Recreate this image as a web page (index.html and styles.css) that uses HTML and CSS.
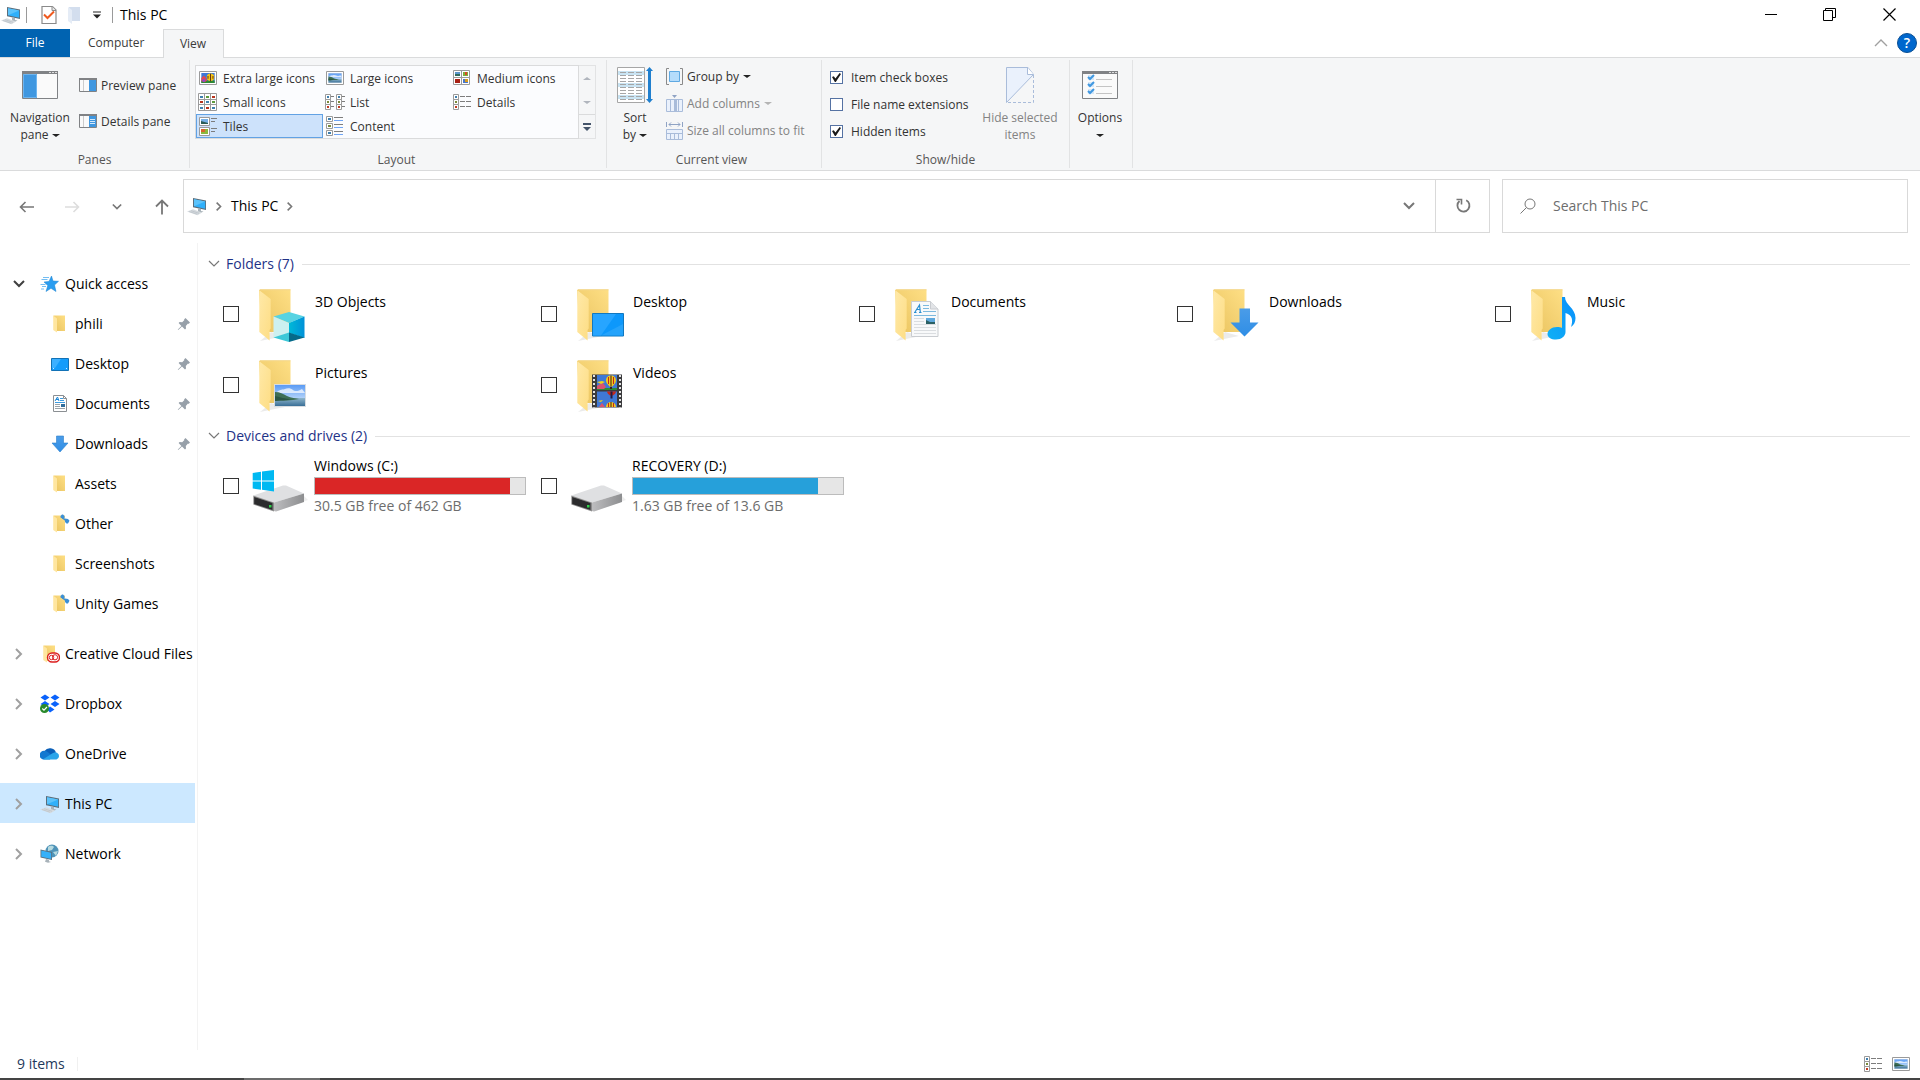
FILE: index.html
```html
<!DOCTYPE html>
<html lang="en">
<head>
  <meta charset="UTF-8">
  <meta name="viewport" content="width=device-width, initial-scale=1.0">
  <title>This PC</title>
  <link rel="stylesheet" href="styles.css">
</head>
<body>
  <!-- shared icons -->
  <svg class="sprite" width="0" height="0" aria-hidden="true">
    <defs>
      <linearGradient id="gFlap" x1="0" y1="0" x2="1" y2="1"><stop offset="0" stop-color="#ffe9a8"/><stop offset="1" stop-color="#fddd84"/></linearGradient>
      <linearGradient id="gBack" x1="1" y1="0" x2="0" y2="1"><stop offset="0" stop-color="#fedf85"/><stop offset="1" stop-color="#e9c35f"/></linearGradient>
      <linearGradient id="gBlue" x1="0" y1="0" x2="0" y2="1"><stop offset="0" stop-color="#4a9ce8"/><stop offset="1" stop-color="#2f8ee6"/></linearGradient>
      <linearGradient id="gSky" x1="0" y1="0" x2="0" y2="1"><stop offset="0" stop-color="#5a9bf5"/><stop offset="1" stop-color="#e6f2fb"/></linearGradient>
      <linearGradient id="gSea" x1="0" y1="0" x2="0" y2="1"><stop offset="0" stop-color="#8fb6cc"/><stop offset="1" stop-color="#3a6f97"/></linearGradient>
      <linearGradient id="gDrive" x1="0" y1="0" x2="1" y2="0"><stop offset="0" stop-color="#bdbdbf"/><stop offset="1" stop-color="#8d8e90"/></linearGradient>
      <linearGradient id="gCube" x1="0" y1="0" x2="1" y2="0"><stop offset="0" stop-color="#00b9d8"/><stop offset="1" stop-color="#0091d8"/></linearGradient>
      <linearGradient id="gNote" x1="0" y1="1" x2="1" y2="0"><stop offset="0" stop-color="#0fb0f5"/><stop offset="1" stop-color="#0a8ffb"/></linearGradient>
    </defs>
    <symbol id="pc" viewBox="0 0 20 20">
      <path d="M6 2 19 4.500v9.500L6 11.200z" fill="#5b6d7a"/><path d="M7 3.200 18.200 5.500v7.300L7 10.300z" fill="#2fb0fb"/><path d="M7 3.200 18.200 5.500 7 10.300z" fill="#5cc3fb"/>
      <path d="M11 12.300 14 13v2l2.500 .6-3 1.400-4-1.200 1.500-.8z" fill="#a9b3ba"/><path d="M0 15.500 6 13.300l9 3.200-4.500 2.700z" fill="#d5dade"/><path d="M2 15.500l8 2.700M4 14.700l8 2.600" stroke="#b4bcc2" stroke-width=".6"/>
    </symbol>
    <symbol id="folder" viewBox="0 0 56 56">
      <path d="M8 55l15-3 10-2-14-4z" fill="#000" opacity=".08"/>
      <path d="M7 4 8 3.500H38.500V46H17L8 20z" fill="url(#gBack)"/><path d="M8 3.800H38.500" stroke="#f3d68a"/>
      <path d="M7.300 4.300 18.700 13V42.500L17.600 44V54.500L7.300 46z" fill="url(#gFlap)"/>
    </symbol>
    <symbol id="mini-folder" viewBox="0 0 20 20">
      <path d="M3.500 1.500H15V17H6z" fill="url(#gBack)"/><path d="M3.200 1.500 7 4.500V18.500L3.200 16z" fill="#ffe6a0"/>
    </symbol>
    <symbol id="mini-drop" viewBox="0 0 20 20">
      <use href="#mini-folder"/><path d="M10.500 2l1.500-1.500h1L14.500 2v2.500L13 5l-2.500-1.500zM15 4.500l3 .5 1.500 1.800-1.500 2.700h-1.500L15 8z" fill="#3b8fd6"/><path d="M12.500 4l4 3" stroke="#3b8fd6" stroke-width="1.500"/>
    </symbol>
    <symbol id="arrow-down" viewBox="0 0 20 20">
      <path d="M6.500 2h7v7H18l-8 9-8-9h4.500z" fill="url(#gBlue)" stroke="#2c7fcb" stroke-width=".6"/>
    </symbol>
    <symbol id="photo" viewBox="0 0 32 23">
      <path d="M0 0h32v23H0z" fill="#d9dde1"/><path d="M1 1h30v21H1z" fill="url(#gSky)"/>
      <path d="M3 8c3-3 6-2 8-3s6-1 8 1 6 1 9-1l3 4H2z" fill="#fff" opacity=".7"/>
      <path d="M1 14h30v8H1z" fill="url(#gSea)"/><path d="M1 8c5 0 8 2 12 4s9 2 12 3c-8 2-16 1-24 2z" fill="#3e6f55"/>
      <path d="M1 12c6 1 9 3 17 3-6 2-11 1-17 2z" fill="#2b5544"/>
    </symbol>
    <symbol id="balloon" viewBox="0 0 16 12">
      <path d="M0 0h16v12H0z" fill="#3c78d8"/><path d="M0 9h16v3H0z" fill="#2d8a34"/><path d="M0 6l3-3 2 2 2 4-3 2-4-1z" fill="#e04a52"/><path d="M1 8l3-1 1 3-3 1z" fill="#8a4bd0"/>
      <circle cx="11" cy="5" r="4.500" fill="#f5c518"/><path d="M10.500 1h1v9h-1z" fill="#4a1b14"/><path d="M7.500 3.500h1v3.500h-1zM13.500 3.500h1v3.500h-1z" fill="#4a1b14"/>
    </symbol>
    <symbol id="pin" viewBox="0 0 14 14">
      <path d="M8.500 1 13 5.500 11.500 7 11 6.600 8.800 9l.2 2.500L8 12.500 5 9.500 1.500 12.800.8 13l.3-.8L4.400 9 1.600 6l1-1L5.200 5.200 7.400 3 7 2.500z" fill="#97a0a9"/>
    </symbol>
    <symbol id="chev-right" viewBox="0 0 10 14"><path d="M2 2l5 5-5 5" fill="none" stroke="currentColor" stroke-width="2"/></symbol>
    <symbol id="chev-down" viewBox="0 0 12 12"><path d="M1 3l5 5 5-5" fill="none" stroke="currentColor" stroke-width="2"/></symbol>
    <symbol id="chev-thin" viewBox="0 0 12 12"><path d="M1 3l5 5 5-5" fill="none" stroke="currentColor" stroke-width="1.200"/></symbol>
    <symbol id="drive" viewBox="0 0 56 56">
      <path d="M22 54 56 42l-4-4z" fill="#000" opacity=".07"/>
      <path d="M1.300 37.500 31 27.500h3L52 35.500 22 44.500z" fill="#dfe0e2"/><path d="M22 44.500 52 35.500v8.500L24 53.500l-2-.5z" fill="url(#gDrive)"/>
      <path d="M1.300 37.500 22 44.500V53.500L1.300 46.500z" fill="#8d8d8d"/><path d="M2.200 39 20.500 45v7L2.200 46z" fill="#2b2b2d"/><path d="M17 47h2.500v2.500H17z" fill="#2fd04a"/>
    </symbol>
    <symbol id="thumb-list" viewBox="0 0 18 18">
      <g fill="#fff" stroke="#9a9a9a"><path d="M.5 1.500h5v5h-5zM.5 6.500h5v5h-5zM.5 11.500h5v5h-5z"/></g>
      <path d="M2 3h2v2H2z" fill="#3f7fae"/><path d="M2 8h2v2H2z" fill="#7a8a3a"/><path d="M2 13h2v2H2z" fill="#c33a22"/>
      <path d="M7 3.500h5M13 3.500h5M7 8.500h5M13 8.500h5M7 13.500h5M13 13.500h5" stroke="#7d7d7d"/>
    </symbol>
  </svg>

  <header class="titlebar">
    <svg class="ico20"><use href="#pc"/></svg>
    <span class="divider"></span>
    <button class="quick" aria-label="Properties">
      <svg width="16" height="20" viewBox="0 0 16 20"><path d="M1 1.500h10.500L15 5v13.500H1z" fill="#fff" stroke="#8a8a8a" stroke-width="1.200"/><path d="M11 1.500V5.500h4" fill="#e6e6e6" stroke="#8a8a8a"/><path d="M3 9.500l3.500 3.500L13 6.500" fill="none" stroke="#ef5a1f" stroke-width="2"/></svg>
    </button>
    <button class="quick" aria-label="New folder">
      <svg width="14" height="20" viewBox="0 0 14 20"><path d="M1 2h11v14H3z" fill="#d3deee"/><path d="M0 2l4 3v14l-4-3z" fill="#e5ecf6"/></svg>
    </button>
    <button class="quick small" aria-label="Customize Quick Access Toolbar">
      <svg width="8" height="8" viewBox="0 0 8 8"><path d="M0 1h8" stroke="#222" stroke-width="1"/><path d="M0 3.500h8L4 7.500z" fill="#222"/></svg>
    </button>
    <span class="divider"></span>
    <h1>This PC</h1>
    <div class="window-buttons">
      <button aria-label="Minimize"><svg width="13" height="13"><path d="M0 6.500h12" stroke="#000"/></svg></button>
      <button aria-label="Restore"><svg width="13" height="13"><path d="M.5 2.500h9v10h-9zM2.500 2.500v-2h10v9h-3" fill="none" stroke="#000"/></svg></button>
      <button aria-label="Close"><svg width="13" height="13"><path d="M.5.5l12 12M12.500.5l-12 12" stroke="#000" stroke-width="1.200"/></svg></button>
    </div>
  </header>

  <div class="tabs">
    <button class="tab file">File</button>
    <button class="tab">Computer</button>
    <button class="tab active">View</button>
    <div class="tabs-right">
      <button aria-label="Minimize the Ribbon"><svg width="14" height="8"><path d="M1 7l6-6 6 6" fill="none" stroke="#a0a0a0" stroke-width="1.400"/></svg></button>
      <button class="help" aria-label="Help">?</button>
    </div>
  </div>

  <section class="ribbon" aria-label="View ribbon">
    <div class="group panes">
      <div class="tools">
        <button class="big">
          <svg width="36" height="36" viewBox="0 0 36 36"><path d="M.5 4.500h35v27H.5z" fill="#fafafa" stroke="#808285"/><path d="M0 4h36v3H0z" fill="#808285"/><path d="M27 5h2v1h-2zM30 5h2v1h-2zM33 5h2v1h-2z" fill="#ddd"/><path d="M1 7h14v24H1z" fill="#3f97e0"/><path d="M1.500 7.500h13v23h-13z" fill="none" stroke="#6db4ee"/></svg>
          Navigation<br>pane <i class="caret"></i>
        </button>
        <div class="pair">
          <button class="line"><svg width="18" height="14"><path d="M.5.5h17v13H.5z" fill="#fafafa" stroke="#808285"/><path d="M0 0h18v2H0z" fill="#808285"/><path d="M4.500 2v11" stroke="#ccc"/><path d="M10 2h7v11h-7z" fill="#3f97e0"/></svg>Preview pane</button>
          <button class="line"><svg width="18" height="14"><path d="M.5.5h17v13H.5z" fill="#fafafa" stroke="#808285"/><path d="M0 0h18v2H0z" fill="#808285"/><path d="M4.500 2v11" stroke="#ccc"/><path d="M10 2h7v11h-7z" fill="#3f97e0"/><path d="M11 5.500h5M11 7.500h5M11 9.500h5" stroke="#d4e9fb"/></svg>Details pane</button>
        </div>
      </div>
      <div class="caption">Panes</div>
    </div>

    <div class="group layout">
      <div class="tools">
        <div class="gallery">
          <button><svg width="20" height="20"><path d="M1.500 3.500h17v13h-17z" fill="#fff" stroke="#9a9a9a"/><use href="#balloon" x="3" y="5" width="14" height="10"/></svg>Extra large icons</button>
          <button><svg width="20" height="20"><path d="M1.500 3.500h17v13h-17z" fill="#fff" stroke="#9a9a9a"/><use href="#photo" x="2" y="5" width="16" height="10"/></svg>Large icons</button>
          <button><svg width="20" height="20"><path d="M1.500 2.500h16v14h-16zM9.500 2.500v14M1.500 9.500h16" fill="#fff" stroke="#9a9a9a"/><path d="M3 4h5v4H3z" fill="#5b96cc"/><path d="M3 6h5v2H3z" fill="#2f6a5c"/><path d="M11 4h5v4h-5z" fill="#7cae3c"/><path d="M13 4h2v3h-2z" fill="#d84a25"/><path d="M3 11h5v4H3z" fill="#a82014"/><path d="M11 11h5v4h-5z" fill="#4a77c8"/><path d="M13 11h3v3h-3z" fill="#d99c1c"/></svg>Medium icons</button>
          <button><svg width="20" height="20"><path d="M.5 1.500h18v17H.5zM6.500 1.500v17M12.500 1.500v17M.5 7.500h18M.5 12.500h18" fill="#fff" stroke="#9a9a9a"/><path d="M2 4h3v2H2zM8 9h3v2H8zM14 15h3v2h-3zM2 15h3v2H2z" fill="#3f7fae"/><path d="M8 4h3v2H8zM14 9h3v2h-3z" fill="#5d9a3c"/><path d="M14 4h3v2h-3zM2 9h3v2H2zM8 15h3v2H8z" fill="#b8321c"/></svg>Small icons</button>
          <button><svg width="20" height="20"><path d="M.5 2.500h5v5h-5zM.5 7.500h5v5h-5zM.5 12.500h5v5h-5zM11.500 2.500h5v5h-5zM11.500 7.500h5v5h-5zM11.500 12.500h5v5h-5z" fill="#fff" stroke="#9a9a9a"/><path d="M2 4h2v2H2zM13 4h2v2h-2z" fill="#3f7fae"/><path d="M2 9h2v2H2zM13 9h2v2h-2z" fill="#7a8a3a"/><path d="M2 14h2v2H2zM13 14h2v2h-2z" fill="#c33a22"/><path d="M6 4.500h3M6 9.500h3M6 14.500h3M17 4.500h3M17 9.500h3M17 14.500h3" stroke="#7d7d7d"/></svg>List</button>
          <button><svg width="20" height="20"><use href="#thumb-list" x="1" y="1" width="18" height="18"/></svg>Details</button>
          <button class="selected"><svg width="20" height="20"><path d="M1.500 1.500h10v8h-10zM1.500 11.500h10v8h-10z" fill="#fff" stroke="#9a9a9a"/><path d="M3 3h7v5H3z" fill="#77b0e6"/><path d="M3 5l7 2v1H3z" fill="#2c5c54"/><path d="M3 13h7v5H3z" fill="#8bb83e"/><path d="M3 13h4v3H3z" fill="#d8662c"/><path d="M13 2.500h6M13 5.500h4M13 12.500h6M13 15.500h4" stroke="#7d7d7d"/></svg>Tiles</button>
          <button><svg width="20" height="20"><path d="M1.500.5h6v5h-6zM1.500 7.500h6v5h-6zM1.500 14.500h6v5h-6z" fill="#fff" stroke="#9a9a9a"/><path d="M3 2h3v2H3zM3 16h3v2H3z" fill="#3f7fae"/><path d="M3 9h3v2H3z" fill="#7a8a3a"/><path d="M9 1.500h9M9 8.500h9M9 15.500h9" stroke="#7d7d7d"/><path d="M9 4.500h9M9 11.500h9M9 18.500h9" stroke="#6fa5f5"/></svg>Content</button>
        </div>
        <div class="gallery-scroll">
          <button aria-label="Row up"><i class="caret up dim"></i></button>
          <button aria-label="Row down"><i class="caret dim"></i></button>
          <button class="more" aria-label="More"><svg width="8" height="8"><path d="M0 1h8" stroke="#44546a" stroke-width="2"/><path d="M0 4h8L4 8z" fill="#44546a"/></svg></button>
        </div>
      </div>
      <div class="caption">Layout</div>
    </div>

    <div class="group current">
      <div class="tools">
        <button class="big narrow">
          <svg width="36" height="36" viewBox="0 0 36 36"><path d="M.5.5h27v35H.5z" fill="#fff" stroke="#a6a6a6"/><path d="M1 4h26v4H1zM1 16h26v4H1zM1 28h26v4H1z" fill="#c9e4f3"/><path d="M3 5.500h22M3 8.500h22M3 11.500h22M3 14.500h22M3 17.500h22M3 20.500h22M3 23.500h22M3 26.500h22M3 29.500h22M3 32.500h22" stroke="#a6a6a6" stroke-dasharray="6 2"/><path d="M32.500 0l3.500 4h-2v28h2l-3.500 4-3.500-4h2V4h-2z" fill="#1f7fce"/></svg>
          Sort<br>by <i class="caret"></i>
        </button>
        <div class="stack">
          <button class="line"><svg width="17" height="17"><path d="M3 .5H.5v16H3M14 .5h2.500v16H14" fill="none" stroke="#8a8a8a"/><path d="M3.500 3.500h10v10h-10z" fill="#b5dcfb" stroke="#5fa9e2"/></svg>Group by <i class="caret"></i></button>
          <button class="line" disabled><svg width="17" height="17"><path d="M.5 4.500h16v12H.5zM4.500 5v11M12.500 5v11" fill="#eaf1fc" stroke="#a9bcda"/><path d="M8 4h3v12H8z" fill="#a9bcda"/><path d="M6 0h5L8.500 3z" fill="#8fa3c4"/></svg>Add columns <i class="caret"></i></button>
          <button class="line" disabled><svg width="17" height="18"><path d="M.5 7.500h16v10H.5zM4.500 11v6M8.500 11v6M12.500 11v6M1 11.500h15" fill="#eaf1fc" stroke="#a9bcda"/><path d="M.5 0v5M16.500 0v5M3 2.500h11M5 .5l-2 2 2 2M12 .5l2 2-2 2" fill="none" stroke="#8fa3c4"/></svg>Size all columns to fit</button>
        </div>
      </div>
      <div class="caption">Current view</div>
    </div>

    <div class="group showhide">
      <div class="tools">
        <div class="stack">
          <label class="line"><input type="checkbox" class="rcheck" checked>Item check boxes</label>
          <label class="line"><input type="checkbox" class="rcheck">File name extensions</label>
          <label class="line"><input type="checkbox" class="rcheck" checked>Hidden items</label>
        </div>
        <button class="big wide" disabled>
          <svg width="28" height="36"><path d="M.5.500H22L27.500 7.500.5 35.500z" fill="#eaf1fc" stroke="#a9bcda"/><path d="M21.500.500v7h6" fill="#fff" stroke="#a9bcda"/><path d="M27.500 8v27.500H0" fill="none" stroke="#a9bcda" stroke-dasharray="3 2"/></svg>
          Hide selected<br>items
        </button>
      </div>
      <div class="caption">Show/hide</div>
    </div>

    <div class="group options">
      <div class="tools">
        <button class="big">
          <svg width="36" height="36"><path d="M.5 4.500h35v27H.5z" fill="#fafafa" stroke="#808285"/><path d="M0 4h36v3H0z" fill="#808285"/><path d="M27 5h2v1h-2zM30 5h2v1h-2zM33 5h2v1h-2z" fill="#ddd"/><path d="M6 8h6v5H6zM6 15h6v5H6zM6 22h6v5H6z" fill="#d5e7f8"/><path d="M6 10l2 2 4-4M6 17l2 2 4-4M6 24l2 2 4-4" fill="none" stroke="#3f97e0" stroke-width="2"/><path d="M14 12.500h16M14 19.500h16M14 26.500h16" stroke="#c4c4c4"/></svg>
          Options<br><i class="caret"></i>
        </button>
      </div>
    </div>
  </section>

  <div class="navbar">
    <div class="history">
      <button aria-label="Back"><svg width="16" height="12"><path d="M15 6H1.500M6.500 1l-5 5 5 5" fill="none" stroke="#777" stroke-width="1.600"/></svg></button>
      <button aria-label="Forward"><svg width="16" height="12"><path d="M1 6h13.500M9.500 1l5 5-5 5" fill="none" stroke="#ddd" stroke-width="1.600"/></svg></button>
      <button aria-label="Recent locations"><svg width="10" height="10" class="gray"><use href="#chev-down"/></svg></button>
      <button aria-label="Up"><svg width="14" height="16"><path d="M7 15.500V1.500M1 7.500l6-6 6 6" fill="none" stroke="#777" stroke-width="1.800"/></svg></button>
    </div>
    <div class="address">
      <svg class="ico20"><use href="#pc"/></svg>
      <svg class="crumb-arrow"><use href="#chev-right"/></svg>
      <button class="crumb">This PC</button>
      <svg class="crumb-arrow"><use href="#chev-right"/></svg>
      <button class="drop" aria-label="Previous locations"><svg width="12" height="12" class="gray"><use href="#chev-down"/></svg></button>
      <button class="refresh" aria-label="Refresh"><svg width="16" height="16"><path d="M11.200 2.200A6 6 0 1 1 4.500 3" fill="none" stroke="#777" stroke-width="1.800"/><path d="M1.500 1.500h5v5" fill="none" stroke="#777" stroke-width="1.600"/></svg></button>
    </div>
    <div class="search">
      <svg width="16" height="16"><circle cx="10" cy="6" r="5" fill="none" stroke="#777"/><path d="M6.500 9.500l-6 6" stroke="#777"/></svg>
      <input type="text" placeholder="Search This PC" aria-label="Search This PC">
    </div>
  </div>

  <div class="body">
    <nav class="tree" aria-label="Navigation pane">
      <ul>
        <li>
          <a href="#"><svg class="exp open"><use href="#chev-down"/></svg><svg class="ico20"><path d="M11.500 2l1.500 5 5.500.3-4 3.700 1.500 6.500-5-3.200-5 3.200 1.800-6L4 8l5-.6z" fill="#2a9df0" stroke="#1980cf" stroke-width=".5"/><path d="M3 3.500h6M1.500 5.500h6M.5 10.500h5M2 12.500h4M1 15h3" stroke="#73bdf2"/></svg>Quick access</a>
          <ul>
            <li><a href="#"><svg class="ico20"><use href="#mini-folder"/></svg>phili<svg class="pin"><use href="#pin"/></svg></a></li>
            <li><a href="#"><svg class="ico20"><path d="M1.500 4.500h17v12h-17z" fill="#149cfb" stroke="#1272b6"/><path d="M2 5h9L5 14H2z" fill="#3cb0ff"/><path d="M3 14.500h14" stroke="#cfe9ff" stroke-dasharray="1 12"/></svg>Desktop<svg class="pin"><use href="#pin"/></svg></a></li>
            <li><a href="#"><svg class="ico20"><path d="M3.500 1.500h10l3 3v13h-13z" fill="#fff" stroke="#8b8f93"/><path d="M13.500 1.500v3h3" fill="none" stroke="#8b8f93"/><path d="M5 7l2.500-4 1.500 4M6 5.500h3" fill="none" stroke="#1b86d6"/><path d="M10 4.500h3M10 6.500h4M5 8.500h10" stroke="#3b9be0"/><path d="M5 10.500h5M5 12.500h5M5 14.500h10" stroke="#9aa3aa"/><path d="M11 10h4v3h-4z" fill="#2f6d9c"/></svg>Documents<svg class="pin"><use href="#pin"/></svg></a></li>
            <li><a href="#"><svg class="ico20"><use href="#arrow-down"/></svg>Downloads<svg class="pin"><use href="#pin"/></svg></a></li>
            <li><a href="#"><svg class="ico20"><use href="#mini-folder"/></svg>Assets</a></li>
            <li><a href="#"><svg class="ico20"><use href="#mini-drop"/></svg>Other</a></li>
            <li><a href="#"><svg class="ico20"><use href="#mini-folder"/></svg>Screenshots</a></li>
            <li><a href="#"><svg class="ico20"><use href="#mini-drop"/></svg>Unity Games</a></li>
          </ul>
        </li>
        <li><a href="#"><svg class="exp"><use href="#chev-right"/></svg><svg class="ico20"><use href="#mini-folder"/><rect x="7.500" y="9" width="12" height="9" rx="4.500" fill="#fff" stroke="#dc1f1f" stroke-width="1.400"/><circle cx="11.500" cy="13.500" r="2.200" fill="none" stroke="#dc1f1f"/><circle cx="15" cy="13.300" r="2.600" fill="none" stroke="#dc1f1f"/></svg>Creative Cloud Files</a></li>
        <li><a href="#"><svg class="exp"><use href="#chev-right"/></svg><svg class="ico20"><path d="M5 .5l4.500 3L5 6.500l-4.500-3zM15 .5l4.500 3-4.500 3-4.500-3zM5 7l4.500 3L5 13 .5 10zM15 7l4.500 3-4.500 3-4.500-3zM10 12.500l4.500 3-4.500 3-3-3z" fill="#0a62fb"/><circle cx="4.500" cy="14.500" r="4.500" fill="#2a8a2c"/><path d="M2.300 14.500l1.700 1.700 3-3.200" fill="none" stroke="#fff" stroke-width="1.200"/></svg>Dropbox</a></li>
        <li><a href="#"><svg class="exp"><use href="#chev-right"/></svg><svg class="ico20"><path d="M4.500 7a6.500 6.500 0 0 1 11.500 1.500l-7 4z" fill="#0a5fb8"/><path d="M4 15.500a4.300 4.300 0 0 1 0-8.700c3 0 5 2 8 5l-2 3.700z" fill="#1278d0"/><path d="M3 15.300l8-5c2-2 5-2 6-1.500a3.600 3.600 0 0 1-.5 6.700H4z" fill="#2aa5ea"/></svg>OneDrive</a></li>
        <li><a href="#" class="current-item" aria-current="page"><svg class="exp"><use href="#chev-right"/></svg><svg class="ico20"><use href="#pc"/></svg>This PC</a></li>
        <li><a href="#"><svg class="exp"><use href="#chev-right"/></svg><svg class="ico20"><circle cx="12" cy="7" r="6.500" fill="#4f93b8"/><path d="M8 3c3-2 5-1 6 0l-2 3-4 1zM13 8l5-1-2 5z" fill="#b5d9df"/><path d="M.5 5.500 12 8v8L.5 13.500z" fill="#5b6d7a"/><path d="M1.300 6.500 11.200 8.700v6.200L1.300 12.800z" fill="#36b1fa"/><path d="M6 15l3 .7v1.500l2 .8-3 .7-3-1z" fill="#a9b3ba"/></svg>Network</a></li>
      </ul>
    </nav>

    <main class="content">
      <section>
        <h2><svg width="12" height="12"><use href="#chev-thin"/></svg>Folders (7)</h2>
        <div class="tiles">
          <div class="tile">
            <input type="checkbox" id="objects"><label for="objects"><svg class="ico56"><use href="#folder"/><path d="M37 26 52.500 30.500 37 37 21.500 30.500z" fill="#57d3e2"/><path d="M21.500 30.500 37 37v10L21.500 52z" fill="#cdf0f0"/><path d="M52.500 30.500 37 37v10l15.500 5z" fill="url(#gCube)"/><path d="M21.500 51.500 37 46.500V56z" fill="#3cc8d8"/><path d="M52.500 51.500 37 46.500V56z" fill="#056a8a"/></svg><span>3D Objects</span></label>
          </div>
          <div class="tile">
            <input type="checkbox" id="desktop"><label for="desktop"><svg class="ico56"><use href="#folder"/><path d="M22.500 27.500h31v22.500h-31z" fill="#0d98fb" stroke="#1178c0"/><path d="M23 28h23L31 49.500h-8z" fill="#27a5ff"/><path d="M53 38v11.500H31z" fill="#35aafc" opacity=".6"/></svg><span>Desktop</span></label>
          </div>
          <div class="tile">
            <input type="checkbox" id="documents"><label for="documents"><svg class="ico56"><use href="#folder"/><path d="M23.500 15.500h19l7.500 7.500v27.500H23.500z" fill="#f8f9fa" stroke="#c9ccd0"/><path d="M42.500 15.500V23H50" fill="#e2e4e7" stroke="#c9ccd0"/><path d="M26 26.500h2.500M27 26l4.500-7 .8 7M31 26.500h2.500M28.500 23.500h3.500" fill="none" stroke="#2a8fd0" stroke-width="1.200"/><path d="M35 19.500h6M35 22.500h6M35 25.500h13M26 29.500h22" stroke="#7db9de"/><path d="M26 32.500h10M26 35.500h10M26 38.500h22M26 41.500h22M26 44.500h22M26 47.500h22" stroke="#dadde0"/><path d="M38 32h9v6h-9z" fill="#5fa8dc"/><path d="M38 34l4 2h5v2h-9z" fill="#2b6064"/></svg><span>Documents</span></label>
          </div>
          <div class="tile">
            <input type="checkbox" id="downloads"><label for="downloads"><svg class="ico56"><use href="#folder"/><path d="M33.500 22.500H44v14h8.500L38.500 50.500 24.500 36.500h9z" fill="url(#gBlue)"/></svg><span>Downloads</span></label>
          </div>
          <div class="tile">
            <input type="checkbox" id="music"><label for="music"><svg class="ico56"><use href="#folder"/><path d="M38 11h3c0 8 10.500 11 10.500 21 0 4-1.500 7-4.500 9 2-6 2-12-5.500-14v19c0 4-4 7.500-9.500 7.500-5 0-8.500-2-8.500-5.500s4-7 9.500-7c2 0 4 .3 5 1z" fill="url(#gNote)"/></svg><span>Music</span></label>
          </div>
          <div class="tile">
            <input type="checkbox" id="pictures"><label for="pictures"><svg class="ico56"><use href="#folder"/><use href="#photo" x="22" y="27" width="32" height="23"/></svg><span>Pictures</span></label>
          </div>
          <div class="tile">
            <input type="checkbox" id="videos"><label for="videos"><svg class="ico56"><use href="#folder"/><path d="M22 17.500h30v33H22z" fill="#3b3b3d"/><path d="M24 18v32.500M50 18v32.500" stroke="#e4e4e4" stroke-width="2" stroke-dasharray="2 2"/><path d="M27 18h20v15H27zM27 34.500h20V50H27z" fill="#3f78d6"/><path d="M27 31h20v2H27z" fill="#2d8a34"/><path d="M27 29l3-2 3-1 3 4-2 2h-7z" fill="#d9526f"/><path d="M27 25l5-1 3 1-4 2z" fill="#f1d21b"/>
            <path d="M41 18.500c3 0 5 2 5 5 0 2.500-2 4-3.500 6h-3c-1.500-2-3.500-3.500-3.500-6 0-3 2-5 5-5z" fill="#f3c81c"/><path d="M38.500 20v7M43.500 20v7" stroke="#c4281c"/><path d="M41 18.500v11" stroke="#3a1d1d"/><path d="M40 30h2v2h-2z" fill="#3a1d1d"/>
            <path d="M37 34.500h9c0 2-2 3-3 4h-3c-1-1-3-2-3-4z" fill="#c4281c"/><path d="M41.500 34.500v7" stroke="#241a40" stroke-width="2"/><path d="M36 50a5 5 0 0 1 10 0z" fill="#f3c81c"/><path d="M38.500 46v4M43.500 46v4" stroke="#c4281c"/><path d="M41 45v5" stroke="#3a1d1d"/><path d="M28 44l5-1-2 2z" fill="#f1d21b"/><path d="M29 50l3-4 3 4z" fill="#d9526f"/></svg><span>Videos</span></label>
          </div>
        </div>
      </section>

      <section>
        <h2><svg width="12" height="12"><use href="#chev-thin"/></svg>Devices and drives (2)</h2>
        <div class="tiles">
          <div class="tile drive">
            <input type="checkbox" id="driveC"><label for="driveC"><svg class="ico56"><use href="#drive"/><path d="M.7 15 9 13.800V22.500H.7zM10 13.600 22 12v10.500H10zM.7 23.500H9v8.200L.7 30.500zM10 23.500h12V33.500l-12-1.700z" fill="#00b9f2"/></svg>
            <span>Windows (C:)<span class="bar"><span class="fill full" style="width: 93%"></span></span><small>30.5 GB free of 462 GB</small></span></label>
          </div>
          <div class="tile drive">
            <input type="checkbox" id="driveD"><label for="driveD"><svg class="ico56"><use href="#drive"/></svg>
            <span>RECOVERY (D:)<span class="bar"><span class="fill" style="width: 88%"></span></span><small>1.63 GB free of 13.6 GB</small></span></label>
          </div>
        </div>
      </section>
    </main>
  </div>

  <footer class="statusbar">
    <span class="count">9 items</span>
    <div class="view-switch">
      <button aria-label="Details view"><svg width="18" height="18"><use href="#thumb-list"/></svg></button>
      <button aria-label="Large icons view"><svg width="18" height="14"><path d="M.5.5h17v13H.5z" fill="#fff" stroke="#9a9a9a"/><use href="#photo" x="2" y="2" width="14" height="10"/></svg></button>
    </div>
  </footer>
  <div class="taskbar-edge"><span></span></div>
</body>
</html>
```
FILE: styles.css
```css
* {
  box-sizing: border-box;
}

body {
  margin: 0;
  min-height: 100vh;
  display: flex;
  flex-direction: column;
  background-color: #fff;
  color: #000;
  font-family: "Open Sans", "Noto Sans", sans-serif;
  font-size: 14px;
  line-height: 20px;
}

button {
  display: flex;
  align-items: center;
  justify-content: center;
  margin: 0;
  padding: 0;
  border: none;
  background: none;
  color: inherit;
  font: inherit;
}

svg {
  flex: none;
}

ul {
  list-style: none;
  margin: 0;
  padding: 0;
}

a {
  color: inherit;
  text-decoration: none;
}

.sprite {
  position: absolute;
}

.ico20 {
  width: 20px;
  height: 20px;
}

.ico56 {
  width: 56px;
  height: 56px;
}

.gray {
  color: #777;
}

/* Title bar */
.titlebar {
  display: flex;
  align-items: center;
  height: 29px;
  padding-left: 1px;
}

.titlebar h1 {
  margin: 0 0 0 7px;
  font-size: 14px;
  font-weight: 400;
}

.divider {
  width: 1px;
  height: 16px;
  margin-left: 5px;
  background-color: #9a9a9a;
}

.quick {
  width: 16px;
  margin-left: 10px;
}

.divider + .quick {
  margin-left: 14px;
}

.quick.small {
  width: 8px;
  margin: 0 6px 0 10px;
}

.window-buttons {
  display: flex;
  margin-left: auto;
}

.window-buttons button {
  width: 58px;
  height: 28px;
}

.window-buttons button:last-child {
  width: 62px;
}

/* Tabs */
.tabs {
  display: flex;
  height: 29px;
  border-bottom: 1px solid #dadbdc;
  font-size: 12px;
  color: #3b3b3b;
}

.tab {
  height: 28px;
  padding: 0 18px;
}

.tab.file {
  width: 70px;
  background-color: #0063b1;
  color: #fff;
}

.tab.active {
  height: 29px;
  width: 61px;
  border: 1px solid #dadbdc;
  border-bottom: none;
  background-color: #f5f6f7;
}

.tabs-right {
  display: flex;
  gap: 9px;
  margin-left: auto;
  padding-right: 3px;
}

.help {
  align-self: center;
  width: 20px;
  height: 20px;
  border: 1px solid #0a4f94;
  border-radius: 50%;
  background-color: #0067cd;
  color: #fff;
  font-weight: 600;
  font-size: 14px;
}

/* Ribbon */
.ribbon {
  display: flex;
  height: 113px;
  padding: 2px 0;
  border-bottom: 1px solid #dadbdc;
  background-color: #f5f6f7;
  color: #333;
  font-size: 12px;
  line-height: 17px;
}

.group {
  display: flex;
  flex-direction: column;
  flex: none;
  border-right: 1px solid #e2e3e4;
}

.panes {
  width: 190px;
  padding-left: 8px;
}

.layout {
  width: 417px;
  padding-left: 5px;
}

.current {
  width: 215px;
  padding-left: 3px;
}

.showhide {
  width: 248px;
  padding-left: 8px;
}

.options {
  width: 63px;
}

.tools {
  display: flex;
  flex: 1;
}

.caption {
  padding-right: 8px;
  text-align: center;
  color: #555;
}

.big {
  display: block;
  align-self: flex-start;
  width: 64px;
  padding-top: 7px;
  text-align: center;
  white-space: nowrap;
}

.big svg {
  display: block;
  margin: 0 auto 6px;
}

.big.narrow {
  width: 50px;
}

.big.wide {
  width: 90px;
  margin-left: auto;
  margin-right: 4px;
}

.options .big {
  width: 60px;
}

.line {
  display: flex;
  align-items: center;
  justify-content: flex-start;
  gap: 4px;
  white-space: nowrap;
}

.pair {
  padding: 7px 0 0 7px;
}

.pair .line {
  height: 36px;
}

.stack {
  padding-top: 3px;
}

.stack .line {
  height: 27px;
}

.current .stack {
  padding-left: 6px;
}

.showhide .stack {
  padding-top: 4px;
}

.showhide .line {
  gap: 8px;
}

button:disabled {
  color: #838383;
}

.caret {
  display: inline-block;
  vertical-align: middle;
  border: 4px solid transparent;
  border-top: 3px solid #222;
  border-bottom: none;
}

button:disabled .caret {
  border-top-color: #b4b4b4;
}

.caret.dim {
  border-top-color: #b0b5bd;
}

.caret.up {
  transform: rotate(180deg);
}

.rcheck {
  width: 13px;
  height: 13px;
}

.gallery {
  display: grid;
  grid-template-columns: repeat(3, 127px);
  grid-template-rows: repeat(3, 24px);
  align-self: flex-start;
  margin-top: 5px;
  padding-right: 1px;
  border: 1px solid #dadbdc;
  background-color: #fbfcfe;
}

.gallery button {
  justify-content: flex-start;
  gap: 5px;
  padding-left: 1px;
  border: 1px solid transparent;
  white-space: nowrap;
}

.gallery .selected {
  border-color: #62a2e4;
  background-color: #cde2fb;
}

.gallery-scroll {
  display: grid;
  grid-template-rows: repeat(3, 24px);
  align-self: flex-start;
  width: 17px;
  margin-top: 5px;
  border: 1px solid #e2e3e4;
  border-left: none;
}

.gallery-scroll .more {
  border-top: 1px solid #dadbdc;
}

/* Navigation bar */
.navbar {
  display: flex;
  height: 72px;
  padding: 8px 12px 10px 0;
}

.history {
  display: flex;
  align-items: center;
  width: 183px;
  padding: 2px 0 0 18px;
}

.history button {
  width: 18px;
  height: 30px;
  margin-right: 27px;
}

.history button:last-child {
  margin-right: 0;
}

.address {
  display: flex;
  align-items: center;
  flex: 1;
  padding-left: 3px;
  border: 1px solid #d9d9d9;
}

.crumb-arrow {
  width: 8px;
  height: 11px;
  margin: 0 8px;
  color: #777;
}

.drop {
  width: 52px;
  height: 52px;
  margin-left: auto;
}

.refresh {
  width: 54px;
  height: 52px;
  border-left: 1px solid #d9d9d9;
}

.search {
  display: flex;
  align-items: center;
  gap: 17px;
  width: 406px;
  margin-left: 12px;
  padding-left: 17px;
  border: 1px solid #d9d9d9;
}

.search input {
  flex: 1;
  padding: 0;
  border: none;
  outline: none;
  font: inherit;
}

.search input::placeholder {
  color: #6d6d6d;
  opacity: 1;
}

/* Body: tree on the left, tiles on the right */
.body {
  display: flex;
  flex: 1;
}

.tree {
  width: 198px;
  padding: 20px 2px 0 0;
  border-right: 1px solid #f3f3f3;
}

.tree > ul > li {
  margin-bottom: 10px;
}

.tree a {
  display: flex;
  align-items: center;
  gap: 5px;
  height: 40px;
  padding: 1px 0 0 13px;
  white-space: nowrap;
}

.tree ul ul a {
  padding-left: 50px;
}

.exp {
  width: 12px;
  height: 14px;
  margin-right: 10px;
  color: #a0a0a0;
}

.exp.open {
  color: #404040;
}

.current-item {
  background-color: #cce8ff;
}

.pin {
  width: 14px;
  height: 14px;
  margin-left: auto;
  margin-right: 4px;
}

.content {
  flex: 1;
  padding: 6px 10px 0 10px;
}

.content h2 {
  display: flex;
  align-items: center;
  height: 30px;
  margin: 0;
  font-size: 14px;
  font-weight: 400;
  color: #1e3287;
}

.content h2 svg {
  margin-right: 6px;
  color: #777;
}

.content h2::after {
  content: "";
  flex: 1;
  height: 1px;
  margin-left: 8px;
  background-color: #e2e2e2;
}

.tiles {
  display: grid;
  grid-template-columns: repeat(auto-fill, 318px);
  padding-left: 15px;
}

.tile {
  display: flex;
  align-items: center;
  height: 71px;
  padding-bottom: 1px;
}

.tile input,
.rcheck {
  appearance: none;
  display: grid;
  place-items: center;
  flex: none;
  margin: 0;
  border: 1px solid #333;
  background-color: #fff;
}

.tile input {
  width: 16px;
  height: 16px;
}

.rcheck {
  border-color: #5572a3;
}

.tile input:checked::before,
.rcheck:checked::before {
  content: "";
  width: 9px;
  height: 9px;
  background-color: #1a1a1a;
  clip-path: polygon(0 45%, 20% 35%, 38% 62%, 85% 0, 100% 12%, 42% 100%, 32% 100%);
}

.tile label {
  display: flex;
  gap: 7px;
  margin-left: 13px;
}

.tile label > span {
  padding-top: 6px;
}

.drive label {
  align-items: center;
  gap: 6px;
}

.drive label > span {
  width: 212px;
  padding: 0;
}

.bar {
  display: block;
  height: 18px;
  margin: 1px 0;
  border: 1px solid #bcbcbc;
  background-color: #e6e6e6;
}

.fill {
  display: block;
  height: 100%;
  background-color: #26a0da;
}

.fill.full {
  background-color: #da2626;
}

.drive small {
  display: block;
  font-size: 14px;
  color: #6d6d6d;
}

/* Status bar */
.statusbar {
  display: flex;
  align-items: center;
  height: 28px;
  padding: 0 10px 0 17px;
  color: #1e395b;
}

.count {
  padding-right: 12px;
  border-right: 1px solid #f0f0f0;
  line-height: 14px;
}

.view-switch {
  display: flex;
  align-items: center;
  gap: 10px;
  margin-left: auto;
}

.taskbar-edge {
  height: 2px;
  padding-left: 244px;
  background-color: #444;
}

.taskbar-edge span {
  display: block;
  width: 76px;
  height: 2px;
  background-color: #6c6c6c;
}
```
